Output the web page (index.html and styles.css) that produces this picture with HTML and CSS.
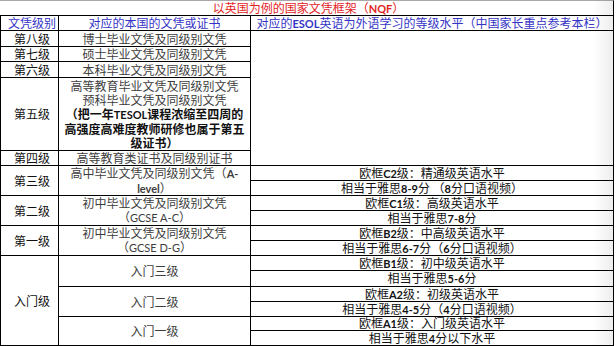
FILE: index.html
```html
<!DOCTYPE html>
<html lang="zh">
<head>
<meta charset="utf-8">
<title>NQF</title>
<link rel="stylesheet" href="styles.css">
</head>
<body>
<div class="wrap">
  <div class="title"><span>以英国为例的国家文凭框架（<b class="b">NQF</b>）</span></div>
  <div class="sheet">
    <div class="cell hd first"><p>文凭级别</p></div>
    <div class="cell hd"><p>对应的本国的文凭或证书</p></div>
    <div class="cell hd"><p>对应的<b class="b">ESOL</b>英语为外语学习的等级水平（中国家长重点参考本栏）</p></div>

    <div class="cell lv"><p>第八级</p></div>
    <div class="cell dc"><p>博士毕业文凭及同级别文凭</p></div>
    <div class="cell en span5"></div>

    <div class="cell lv"><p>第七级</p></div>
    <div class="cell dc"><p>硕士毕业文凭及同级别文凭</p></div>

    <div class="cell lv"><p>第六级</p></div>
    <div class="cell dc"><p>本科毕业文凭及同级别文凭</p></div>

    <div class="cell lv"><p>第五级</p></div>
    <div class="cell dc"><p>高等教育毕业文凭及同级别文凭<br>预科毕业文凭及同级别文凭<br><span class="strong">（把一年<b class="b">TESOL</b>课程浓缩至四周的<br>高强度高难度教师研修也属于第五<br>级证书）</span></p></div>

    <div class="cell lv"><p>第四级</p></div>
    <div class="cell dc"><p>高等教育类证书及同级别证书</p></div>

    <div class="cell lv span2"><p>第三级</p></div>
    <div class="cell dc span2"><p>高中毕业文凭及同级别文凭（<b class="b">A-</b><br><b class="b">level</b>）</p></div>
    <div class="cell en"><p>欧框<b class="b">C2</b>级：精通级英语水平</p></div>
    <div class="cell en"><p>相当于雅思<b class="b">8-9</b>分 （<b class="b">8</b>分口语视频）</p></div>

    <div class="cell lv span2"><p>第二级</p></div>
    <div class="cell dc span2"><p>初中毕业文凭及同级别文凭<br>（<span class="l">GCSE A-C</span>）</p></div>
    <div class="cell en"><p>欧框<b class="b">C1</b>级：高级英语水平</p></div>
    <div class="cell en"><p>相当于雅思<b class="b">7-8</b>分</p></div>

    <div class="cell lv span2"><p>第一级</p></div>
    <div class="cell dc span2"><p>初中毕业文凭及同级别文凭<br>（<span class="l">GCSE D-G</span>）</p></div>
    <div class="cell en"><p>欧框<b class="b">B2</b>级：中高级英语水平</p></div>
    <div class="cell en"><p>相当于雅思<b class="b">6-7</b>分（<b class="b">6</b>分口语视频）</p></div>

    <div class="cell lv span6"><p>入门级</p></div>
    <div class="cell dc span2"><p>入门三级</p></div>
    <div class="cell en"><p>欧框<b class="b">B1</b>级：初中级英语水平</p></div>
    <div class="cell en"><p>相当于雅思<b class="b">5-6</b>分</p></div>
    <div class="cell dc span2"><p>入门二级</p></div>
    <div class="cell en"><p>欧框<b class="b">A2</b>级：初级英语水平</p></div>
    <div class="cell en"><p>相当于雅思<b class="b">4-5</b>分（<b class="b">4</b>分口语视频）</p></div>
    <div class="cell dc span2"><p>入门一级</p></div>
    <div class="cell en"><p>欧框<b class="b">A1</b>级：入门级英语水平</p></div>
    <div class="cell en"><p>相当于雅思<b class="b">4</b>分以下水平</p></div>
  </div>
</div>
</body>
</html>
```

FILE: styles.css
```css
html, body {
  margin: 0;
  padding: 0;
  background: #fff;
}

body {
  font-family: "Noto Sans CJK SC", "Noto Sans", sans-serif;
  font-size: 12px;
  color: #111;
}

.wrap {
  position: relative;
  width: 614px;
}

.wrap::after {
  content: "";
  position: absolute;
  top: 0;
  bottom: 0;
  right: 1px;
  width: 20px;
  background: linear-gradient(to right, rgba(0, 0, 0, 0), rgba(0, 0, 0, 0.07));
  pointer-events: none;
}

.title {
  height: 14px;
  line-height: 14px;
  border-top: 1px solid #a8a8a8;
  border-right: 1px solid #000;
  text-align: center;
  color: #e3241f;
  font-size: 12px;
  padding-left: 4px;
}

.sheet {
  display: grid;
  grid-template-columns: 57px 191px 362px;
  grid-template-rows: 14px 15px 14px 15px 72px 14px 14px 14px 14px 14px 14px 14px 14px 15px 14px 14px 13px 14px;
  gap: 1px;
  background: #000;
  border: 1px solid #000;
}

.cell {
  background: #fff;
  display: flex;
  justify-content: center;
  align-items: center;
  text-align: center;
  line-height: 14px;
  white-space: nowrap;
}

.cell p {
  margin: 0;
}

.span2 { grid-row: span 2; }
.span5 { grid-row: span 5; }
.span6 { grid-row: span 6; }

.hd {
  color: #3434c6;
}

.hd.first,
.lv {
  padding-left: 5px;
}

.lv {
  color: #111;
}

.dc {
  color: #3d3d3d;
}

.en {
  color: #111;
}

.b {
  font-family: "Lato", "Liberation Sans", sans-serif;
  font-weight: 700;
  font-size: 11px;
}

.l {
  font-family: "Lato", "Liberation Sans", sans-serif;
  font-size: 11px;
}

.strong {
  color: #111;
  font-weight: 700;
}
```
